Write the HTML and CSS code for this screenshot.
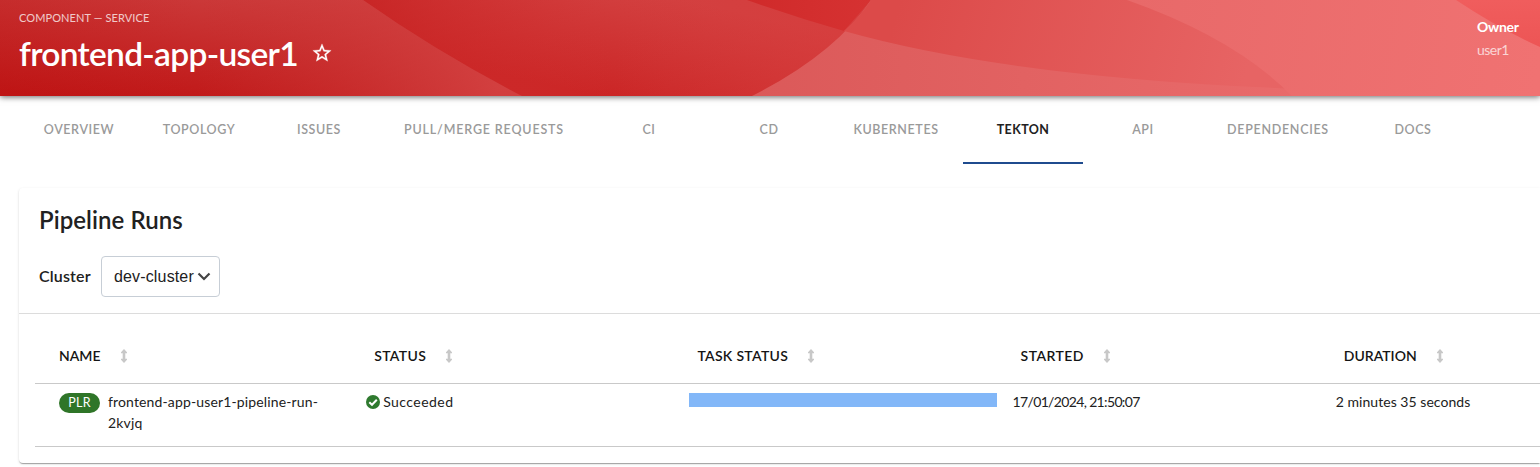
FILE: index.html
```html
<!DOCTYPE html>
<html lang="en">
<head>
<meta charset="utf-8">
<title>frontend-app-user1</title>
<link rel="stylesheet" href="styles.css">
</head>
<body>
<header class="hero">
  <svg class="hero-art" viewBox="0 0 1540 96" preserveAspectRatio="none" aria-hidden="true">
    <defs>
      <linearGradient id="gA" gradientUnits="userSpaceOnUse" x1="210" y1="-30" x2="185" y2="120"><stop offset="0" stop-color="#ce4242"/><stop offset="1" stop-color="#be1212"/></linearGradient>
      <linearGradient id="gA2" gradientUnits="userSpaceOnUse" x1="0" x2="500" y1="0" y2="30"><stop offset="0" stop-color="#c02424" stop-opacity=".2"/><stop offset=".4" stop-color="#c82a2a" stop-opacity="0"/><stop offset="1" stop-color="#d54444" stop-opacity=".8"/></linearGradient>
      <linearGradient id="gB" gradientUnits="userSpaceOnUse" x1="640" y1="-10" x2="615" y2="100"><stop offset="0" stop-color="#d34141"/><stop offset="1" stop-color="#cb2525"/></linearGradient>
      <linearGradient id="gB2" x1="0" x2="1" y1="0" y2="0"><stop offset="0" stop-color="#c62222" stop-opacity=".7"/><stop offset=".5" stop-color="#d33838" stop-opacity="0"/><stop offset="1" stop-color="#d93c3c" stop-opacity=".6"/></linearGradient>
      <linearGradient id="gC" x1="0" x2="1" y1="0" y2="0"><stop offset="0" stop-color="#d02a2a"/><stop offset="1" stop-color="#d63232"/></linearGradient>
      <linearGradient id="gD" gradientUnits="userSpaceOnUse" x1="900" y1="0" x2="1240" y2="96"><stop offset="0" stop-color="#dc4a49"/><stop offset="1" stop-color="#e76464"/></linearGradient>
      <linearGradient id="gE" gradientUnits="userSpaceOnUse" x1="750" y1="0" x2="1300" y2="0"><stop offset="0" stop-color="#db5959"/><stop offset="1" stop-color="#e96b6b"/></linearGradient>
      <linearGradient id="gF" gradientUnits="userSpaceOnUse" x1="1130" y1="0" x2="1540" y2="60"><stop offset="0" stop-color="#e86969"/><stop offset="1" stop-color="#f07272"/></linearGradient>
      <linearGradient id="gG" x1="0" x2="0" y1="0" y2="1"><stop offset="0" stop-color="#f05d5d"/><stop offset="1" stop-color="#ed5555"/></linearGradient>
    </defs>
    <rect width="900" height="96" fill="url(#gB)"/>
    <rect x="363" width="500" height="96" fill="url(#gB2)"/>
    <path d="M0 0H363Q437 52 522 96H0Z" fill="url(#gA)"/>
    <path d="M0 0H363Q437 52 522 96H0Z" fill="url(#gA2)"/>
    <path d="M747 0H871L844 31Q795 17 747 0Z" fill="url(#gC)"/>
    <path d="M871 0H1540V96H752Q835 54 871 0Z" fill="url(#gE)"/>
    <path d="M871 0H1300V89Q1010 78 844 31Q860 17 871 0Z" fill="url(#gD)"/>
    <path d="M1127 0H1540V96H1292Q1235 38 1127 0Z" fill="url(#gF)"/>
    <path d="M1456 0H1540V47Q1498 28 1456 0Z" fill="url(#gG)"/>
  </svg>
  <div class="hero-content">
    <div class="entity">
      <div class="kind">COMPONENT — SERVICE</div>
      <div class="title-row">
        <h1 class="title">frontend-app-user1</h1>
        <svg class="star" viewBox="0 0 24 24"><path fill="#fff" stroke="#fff" stroke-width=".3" d="M22 9.24l-7.19-.62L12 2 9.190 8.630 2 9.240l5.460 4.730L5.820 21 12 17.270 18.180 21l-1.630-7.030L22 9.240zM12 15.400l-3.760 2.270 1-4.280-3.320-2.880 4.380-.38L12 6.100l1.710 4.040 4.380.38-3.320 2.880 1 4.280L12 15.400z"/></svg>
      </div>
    </div>
    <div class="owner">
      <div class="owner-label">Owner</div>
      <div class="owner-name">user1</div>
    </div>
  </div>
</header>
<nav class="tabs">
  <a class="tab">OVERVIEW</a>
  <a class="tab">TOPOLOGY</a>
  <a class="tab">ISSUES</a>
  <a class="tab tab-pulls">PULL/MERGE REQUESTS</a>
  <a class="tab">CI</a>
  <a class="tab">CD</a>
  <a class="tab tab-kube">KUBERNETES</a>
  <a class="tab tab-active">TEKTON</a>
  <a class="tab">API</a>
  <a class="tab tab-deps">DEPENDENCIES</a>
  <a class="tab">DOCS</a>
</nav>
<main class="card">
  <div class="card-head">
    <h2 class="card-title">Pipeline Runs</h2>
    <div class="cluster">
      <span class="cluster-label">Cluster</span>
      <div class="select">
        <span class="select-value">dev-cluster</span>
        <svg class="chevron" viewBox="0 0 14 10"><path d="M1.500 1.500L7 7 12.500 1.500" fill="none" stroke="#444" stroke-width="2.200"/></svg>
      </div>
    </div>
  </div>
  <div class="table">
    <div class="row row-head">
      <div class="th"><span>NAME</span><svg class="sort" viewBox="0 0 8 14"><path d="M4 0L7 3.200V4.300H5.300v5.400H7v1.100L4 14 1 10.800V9.700h1.700V4.300H1V3.200z"/></svg></div>
      <div class="th"><span class="th-status">STATUS</span><svg class="sort" viewBox="0 0 8 14"><path d="M4 0L7 3.200V4.300H5.300v5.400H7v1.100L4 14 1 10.800V9.700h1.700V4.300H1V3.200z"/></svg></div>
      <div class="th"><span class="th-task">TASK STATUS</span><svg class="sort" viewBox="0 0 8 14"><path d="M4 0L7 3.200V4.300H5.300v5.400H7v1.100L4 14 1 10.800V9.700h1.700V4.300H1V3.200z"/></svg></div>
      <div class="th"><span class="th-started">STARTED</span><svg class="sort" viewBox="0 0 8 14"><path d="M4 0L7 3.200V4.300H5.300v5.400H7v1.100L4 14 1 10.800V9.700h1.700V4.300H1V3.200z"/></svg></div>
      <div class="th"><span class="th-duration">DURATION</span><svg class="sort" viewBox="0 0 8 14"><path d="M4 0L7 3.200V4.300H5.300v5.400H7v1.100L4 14 1 10.800V9.700h1.700V4.300H1V3.200z"/></svg></div>
    </div>
    <div class="row row-body">
      <div class="td td-name"><span class="badge">PLR</span><span class="run-name">frontend-app-user1-pipeline-run-<br>2kvjq</span></div>
      <div class="td td-status"><svg class="check" viewBox="0 0 14 14"><circle cx="7" cy="7" r="7" fill="#2f7a2f"/><path d="M3.300 7.200L6 9.800l4.800-5" fill="none" stroke="#fff" stroke-width="2"/></svg><span class="status-text">Succeeded</span></div>
      <div class="td td-task"><div class="bar"></div></div>
      <div class="td"><span class="started">17/01/2024, 21:50:07</span></div>
      <div class="td"><span class="duration">2 minutes 35 seconds</span></div>
    </div>
  </div>
</main>
</body>
</html>
```
FILE: styles.css
```css
* { box-sizing: border-box; }
body { margin: 0; height: 467px; overflow: hidden; background: #fff; color: #212121; font-family: Lato, sans-serif; }
.hero { position: relative; height: 96px; box-shadow: 0 1px 6px rgba(0,0,0,.6); }
.hero-art { position: absolute; inset: 0; width: 100%; height: 96px; display: block; }
.hero-content { position: relative; display: flex; justify-content: space-between; color: #fff; padding-left: 19px; }
.kind { padding-top: 10px; height: 33px; font-size: 11px; line-height: 16px; opacity: .75; letter-spacing: .1px; }
.title-row { display: flex; align-items: center; height: 40px; }
.title { margin: 0; width: 278px; font-size: 33.500px; line-height: 40px; font-weight: 600; letter-spacing: -.7px; white-space: nowrap; }
.star { width: 22px; height: 22px; margin-left: 14px; }
.owner { width: 63px; padding-top: 16px; font-size: 14px; line-height: 21px; }
.owner-label { font-weight: 700; height: 23px; letter-spacing: -.3px; }
.owner-name { opacity: .7; letter-spacing: -.5px; }
.tabs { display: flex; height: 68px; padding-left: 19px; }
.tab { width: 120px; flex: none; text-align: center; font-size: 12.500px; font-weight: 600; line-height: 16px; padding-top: 25.500px; color: #9a9a9a; letter-spacing: .6px; white-space: nowrap; }
.tab-pulls { width: 210px; letter-spacing: .83px; }
.tab-kube { width: 134px; }
.tab-deps { width: 150px; letter-spacing: .7px; }
.tab-active { color: #212121; font-weight: 700; letter-spacing: .4px; border-bottom: 2px solid #1f4b8e; }
.card { margin: 24px 0 0 19px; height: 275px; border-radius: 4px 0 0 4px; background: #fff; box-shadow: 0 2px 1px -1px rgba(0,0,0,.2), 0 1px 1px rgba(0,0,0,.14), 0 1px 3px rgba(0,0,0,.12); }
.card-head { height: 126px; padding: 16px 20px 0; border-bottom: 1px solid #dcdcdc; }
.card-title { margin: 0; font-size: 24px; line-height: 32px; font-weight: 600; letter-spacing: .07px; }
.cluster { display: flex; align-items: center; margin-top: 20px; }
.cluster-label { width: 62px; padding-bottom: 3px; font-size: 16px; font-weight: 600; letter-spacing: .15px; }
.select { display: flex; align-items: center; width: 119px; height: 41px; padding-left: 12px; border: 1px solid #c7ced6; border-radius: 4px; font: 16px "Liberation Sans", sans-serif; letter-spacing: .15px; }
.select-value { width: 83px; }
.chevron { width: 14px; height: 10px; }
.table { margin-left: 16px; }
.row { display: grid; grid-template-columns: repeat(4, 323.200px) 1fr; border-bottom: 1px solid #c9c9c9; }
.row-head { height: 70px; }
.th { display: flex; align-items: center; padding: 14px 0 0 16px; font-size: 14px; font-weight: 600; color: #151515; white-space: nowrap; }
.th:first-child { padding-left: 24px; }
.th-status { width: 52px; letter-spacing: .35px; }
.th-task { width: 91px; letter-spacing: .3px; }
.th-started { width: 63px; letter-spacing: .45px; }
.th-duration { width: 73px; }
.sort { width: 8px; height: 14px; margin-left: 19px; fill: #c8c8c8; }
.row-body { height: 63px; }
.td { padding: 7px 8px 0; font-size: 14px; line-height: 21px; white-space: nowrap; }
.td-name { display: flex; padding-left: 24px; }
.run-name { letter-spacing: .14px; }
.badge { width: 41px; height: 20px; margin: 2px 8px 0 0; border-radius: 20px; background: #2f7528; color: #fff; font-size: 12.500px; line-height: 20px; text-align: center; letter-spacing: .3px; }
.td-status { display: flex; }
.status-text { letter-spacing: .45px; }
.started { letter-spacing: -.65px; }
.duration { letter-spacing: .04px; }
.check { width: 14px; height: 14px; margin: 4px 3px 0 0; }
.td-task { padding-top: 9px; }
.bar { height: 14px; background: #82b7f8; }
```
